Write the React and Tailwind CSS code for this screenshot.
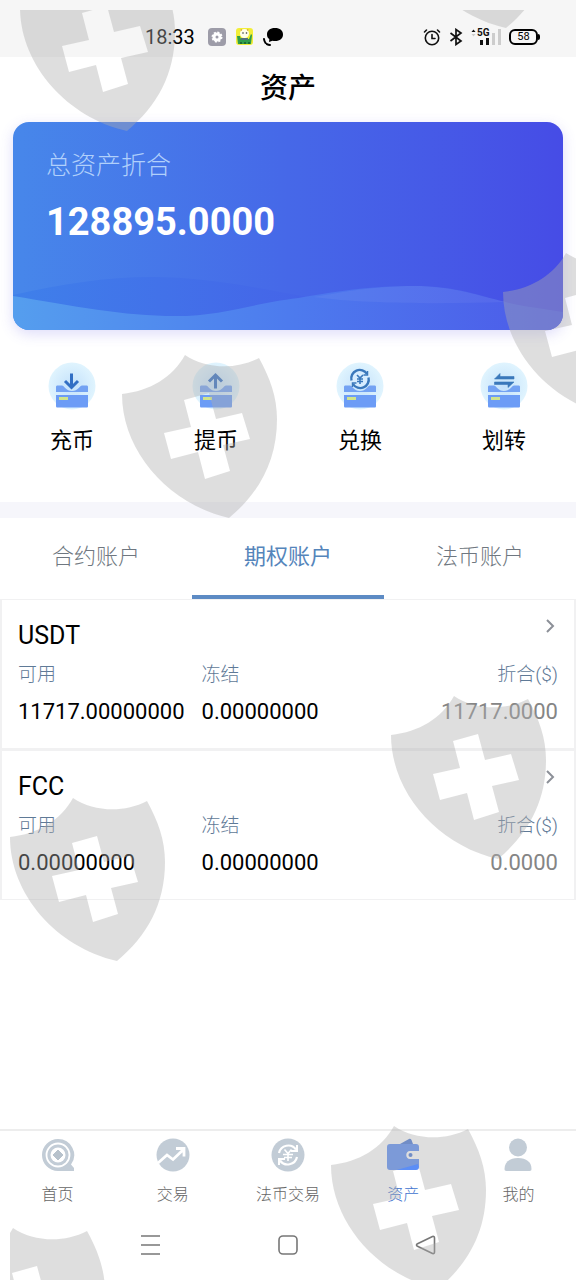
// src/App.jsx
import React, { useState } from 'react';

const actions = [
  { label: '充币', type: 'in' },
  { label: '提币', type: 'out' },
  { label: '兑换', type: 'exchange' },
  { label: '划转', type: 'transfer' },
];

const tabs = ['合约账户', '期权账户', '法币账户'];

const coins = [
  { name: 'USDT', available: '11717.00000000', frozen: '0.00000000', total: '11717.0000' },
  { name: 'FCC', available: '0.00000000', frozen: '0.00000000', total: '0.0000' },
];

const navItems = [
  { label: '首页', type: 'home' },
  { label: '交易', type: 'trade' },
  { label: '法币交易', type: 'fiat' },
  { label: '资产', type: 'wallet' },
  { label: '我的', type: 'me' },
];

const StatusBar = () => (
  <div className="flex h-[57px] items-center bg-[#f6f6f6] pt-4 pr-9 pl-[145px] text-black">
    <span className="text-xl">18:33</span>
    <svg className="ml-3 h-5 w-5" viewBox="0 0 20 20">
      <rect x="1" y="1" width="18" height="18" rx="4" fill="#9d9ca8" />
      <circle cx="10" cy="10" r="4.500" fill="#fff" />
      <circle cx="10" cy="10" r="4.500" fill="none" stroke="#fff" strokeWidth="2" strokeDasharray="2 1.500" />
      <circle cx="10" cy="10" r="1.500" fill="#9d9ca8" />
    </svg>
    <svg className="ml-2 h-5 w-5" viewBox="0 0 20 20">
      <rect x="1" y="1" width="17" height="17" rx="3" fill="#f2ee38" />
      <path d="M2 9h3l1 3h8l2-5 1 1-1 9H3z" fill="#2f9d4b" />
      <circle cx="9.500" cy="6.500" r="4.500" fill="#fffdec" />
      <path d="M5 3l2-1v2zM14 3l-2-1v2z" fill="#d9a63a" />
      <circle cx="8" cy="6" r=".8" fill="#333" />
      <circle cx="11.500" cy="6" r=".8" fill="#333" />
      <path d="M6 11h7v2H6z" fill="#51717d" />
      <path d="M5 15h2v2H5zM9 15h2v2H9zM13 15h2v2h-2z" fill="#1d6b35" />
    </svg>
    <svg className="ml-2 h-5 w-5" viewBox="0 0 20 20">
      <path d="M12 1c5 0 8 2.600 8 6.500S17 14 12 14c-1 0-1.600 0-2.500-.3L6 15l.3-3C4.700 11 4 9.500 4 7.500 4 3.600 7 1 12 1z" fill="#000" />
      <path d="M1 12c.5 4 3 6 6 6" fill="none" stroke="#000" strokeWidth="2" strokeLinecap="round" strokeDasharray="4 2" />
    </svg>
    <div className="ml-auto flex items-center gap-2">
      <svg className="h-[18px] w-[18px]" viewBox="0 0 18 18" fill="none" stroke="#111" strokeWidth="1.600" strokeLinecap="round">
        <circle cx="9" cy="10" r="6.700" />
        <path d="M9 6.500V10.500h3M1.500 4l2-2M16.500 4l-2-2" />
      </svg>
      <svg className="h-[18px] w-[14px]" viewBox="0 0 14 18" fill="none" stroke="#111" strokeWidth="1.700">
        <path d="M1.500 5l10.500 8-5 3.500v-15L12 5 1.500 13" />
      </svg>
      <svg className="h-[18px] w-[30px]" viewBox="0 0 30 18">
        <path d="M0.500 4L2.500 1.500 4.500 4z" fill="#111" />
        <path d="M0.500 6L2.500 8.500 4.500 6z" fill="#ccc" />
        <text x="6" y="8" fontSize="10" fontWeight="700" fill="#111">5G</text>
        <path d="M9 12h3v5H9zM15 10h3v7h-3z" fill="#111" />
        <path d="M21 5h3v12h-3zM27 1h3v16h-3z" fill="#cdcdcd" />
      </svg>
      <div className="flex items-center">
        <span className="flex h-4 w-[29px] items-center justify-center rounded-md border-2 border-black text-[11px] leading-none">58</span>
        <span className="h-1.5 w-0.5 rounded-r bg-black" />
      </div>
    </div>
  </div>
);

const BalanceCard = () => (
  <section className="mx-[13px] rounded-2xl shadow-[0_4px_14px_rgba(90,80,230,0.2)]">
    <div className="relative h-[208px] overflow-hidden rounded-2xl bg-linear-to-r from-[#4787ea] via-[#4668e8] to-[#464ce6] pt-[26px] pl-[33px]">
      <svg className="absolute inset-x-0 bottom-0 h-[60px] w-full" viewBox="0 0 549 60" preserveAspectRatio="none">
        <defs>
          <linearGradient id="deep" x1="0" x2="1">
            <stop offset="0" stopColor="#3f80ea" />
            <stop offset="1" stopColor="#4563e8" />
          </linearGradient>
          <linearGradient id="light" x1="0" x2="1">
            <stop offset="0" stopColor="#559eee" />
            <stop offset=".5" stopColor="#4d7bee" />
            <stop offset="1" stopColor="#4c5ae9" />
          </linearGradient>
        </defs>
        <path d="M0 25C50 14 90 7 140 7S240 17 300 28L200 50 0 40z" fill="url(#deep)" />
        <path d="M0 26C60 36 110 46 162 46C210 46 235 34 285 28C330 20 360 16 400 16C450 16 475 30 510 36L549 42V60H0z" fill="url(#light)" />
        <path d="M300 27C340 20 365 16 400 16C440 16 465 26 492 32C430 34 350 34 300 27z" fill="#fff" fillOpacity=".05" />
      </svg>
      <div className="relative">
        <h2 className="text-[25px] leading-9 font-light text-[#b1d0fb]">总资产折合</h2>
        <p className="mt-[15px] text-[38px] leading-[46px] font-bold text-white">128895.0000</p>
      </div>
    </div>
  </section>
);

const ActionIcon = ({ type }) => (
  <svg className="h-12 w-12" viewBox="0 0 48 48" fill="none">
    <defs>
      <radialGradient id={`halo-${type}`}>
        <stop offset="0" stopColor="#c3e1fb" />
        <stop offset="1" stopColor="#e0f4fe" />
      </radialGradient>
    </defs>
    <circle cx="24" cy="24" r="23.500" fill={`url(#halo-${type})`} />
    <path d="M8 25c0-1 .5-1.500 1.500-1.500H14c2 0 4 5.500 10 5.500s8-5.500 10-5.500h4.500c1 0 1.500.5 1.500 1.500v5H8z" fill="#73a2f3" />
    <path d="M8 33h32v11c0 1-.5 1.500-1.500 1.500h-29C8.500 45.500 8 45 8 44z" fill="#6c9cf6" />
    <path d="M11 35h9v3h-9z" fill="#d0e48c" />
    {type === 'in' && <path d="M23.500 11.500v14M17 19l6.500 6.500L30 19" stroke="#326fc4" strokeWidth="3" />}
    {type === 'out' && <path d="M23.500 26.500v-13M17 19.500l6.500-6.500 6.500 6.500" stroke="#326fc4" strokeWidth="3" />}
    {type === 'exchange' && (
      <g stroke="#3a78bb" strokeWidth="2.400">
        <circle cx="24" cy="17" r="10.500" fill="#d7edff" stroke="none" />
        <path d="M15.500 18.500A8.500 8.500 0 0 1 31 12M32.500 15.500A8.500 8.500 0 0 1 17 22" />
        <path d="M31.500 9v4h-4M16.500 25v-4h4" strokeWidth="1.500" />
        <path d="M21 13l3 3 3-3M24 16v6M21 17h6M21 19.500h6" strokeWidth="1.600" />
      </g>
    )}
    {type === 'transfer' && (
      <path
        d="M20 11.500V14.500h14v2.500H14.500zM14.500 20h19.500L28 25.500V22.500H14.500z"
        fill="#3a78bb"
        stroke="#3a78bb"
        strokeWidth=".6"
        strokeLinejoin="round"
      />
    )}
  </svg>
);

const CoinCard = ({ coin }) => (
  <li className="h-[150px] border-x-2 border-y border-[#f1f1f2] bg-white px-4 pt-3">
    <div className="flex justify-between">
      <h3 className="pt-1.5 text-[25px] leading-9 text-black">{coin.name}</h3>
      <button type="button" aria-label={coin.name} className="flex h-7 w-4 items-center justify-center">
        <svg className="h-3.5 w-2.5" viewBox="0 0 10 14" fill="none" stroke="#8c9098" strokeWidth="2">
          <path d="M2 1l6 6-6 6" />
        </svg>
      </button>
    </div>
    <dl className="mt-0.5 grid grid-cols-[34%_33%_33%]">
      <div>
        <dt className="text-[19px] leading-[38px] font-light text-[#5f7a97]">可用</dt>
        <dd className="text-[22px] leading-9 text-black">{coin.available}</dd>
      </div>
      <div>
        <dt className="text-[19px] leading-[38px] font-light text-[#5f7a97]">冻结</dt>
        <dd className="text-[22px] leading-9 text-black">{coin.frozen}</dd>
      </div>
      <div className="text-right">
        <dt className="text-[19px] leading-[38px] font-light text-[#5f7a97]">折合($)</dt>
        <dd className="text-[22px] leading-9 text-[#858585]">{coin.total}</dd>
      </div>
    </dl>
  </li>
);

const NavIcon = ({ type }) => (
  <svg className="h-9 w-9" viewBox="0 0 36 36" fill="none">
    {type === 'home' && (
      <g>
        <path d="M18 2a16 16 0 1 0 0 32h16v-3l-3-3.500A16 16 0 0 0 18 2z" fill="#c2ccd6" />
        <circle cx="18" cy="18" r="11.500" stroke="#fff" strokeWidth="1.800" />
        <circle cx="18" cy="18" r="7.500" fill="#fff" />
        <path d="M18 13l5 5-5 5-5-5z" fill="#b7c2cc" stroke="#b7c2cc" strokeLinejoin="round" />
      </g>
    )}
    {type === 'trade' && (
      <g>
        <circle cx="18" cy="18" r="16.500" fill="#c2ccd6" />
        <path d="M3 26l9-8 6 4.500L28.500 12.500M21 11.500h8v8" stroke="#fff" strokeWidth="2.800" />
      </g>
    )}
    {type === 'fiat' && (
      <g>
        <circle cx="18" cy="18" r="16.500" fill="#c2ccd6" />
        <path d="M9 16a9.500 9.500 0 0 1 17-3.500M27 20a9.500 9.500 0 0 1-17 3.500" stroke="#fff" strokeWidth="2.200" />
        <path d="M27 8v6h-6M9 28v-6h6" stroke="#fff" strokeWidth="2" />
        <path d="M14.500 12.500l3.500 4 3.500-4M18 16.500V24M13 17.500h10M14 20.500h8" stroke="#fff" strokeWidth="1.600" />
      </g>
    )}
    {type === 'wallet' && (
      <g>
        <path d="M15 7l9-5c1-.5 2 0 2.500 1L28 7z" fill="#4a78d8" />
        <path d="M5 7h26c2 0 3 1 3 3v4h-9c-5 0-5 8 0 8h9v8c0 2-1 3-3 3H5c-2 0-3-1-3-3V10c0-2 1-3 3-3z" fill="#5c8ef6" />
        <circle cx="25.500" cy="18" r="2" fill="#4a78d8" />
      </g>
    )}
    {type === 'me' && (
      <g fill="#c2ccd6">
        <circle cx="18" cy="10.500" r="9" />
        <path d="M4.500 32c0-7 5-11 13.500-11s13.500 4 13.500 11c0 1-.5 2-2 2h-23c-1.500 0-2-1-2-2z" />
      </g>
    )}
  </svg>
);

const SystemBar = () => (
  <div className="flex h-[70px] items-center justify-between px-[138px]">
    <button type="button" aria-label="menu">
      <svg className="h-6 w-6" viewBox="0 0 24 24" stroke="#777" strokeWidth="1.600">
        <path d="M3 3h19M3 12h19M3 21h19" />
      </svg>
    </button>
    <button type="button" aria-label="home">
      <svg className="h-6 w-6" viewBox="0 0 24 24" fill="none" stroke="#777" strokeWidth="1.600">
        <rect x="3" y="3" width="18" height="18" rx="4" />
      </svg>
    </button>
    <button type="button" aria-label="back">
      <svg className="h-6 w-6" viewBox="0 0 24 24" fill="none" stroke="#777" strokeWidth="1.600" strokeLinejoin="round">
        <path d="M3 11L18.500 3.500Q20.500 3 20.500 5v14q0 2-2 1.500L3 13Q2 12 3 11z" />
      </svg>
    </button>
  </div>
);

const Shield = ({ className }) => (
  <svg className={`absolute h-[164px] w-[156px] ${className}`} viewBox="0 0 156 164">
    <path
      d="M0 39C28 36 51 22 63 0C84 14 114 15 137 3C148 23 155 42 155 64C155 106 137 138 107 163C46 149 0 96 0 39z
         M62 45L69 72 42 78 49 104 76 97 83 124 108 116 101 90 128 84 120 58 94 64 87 38z"
      fill="#adadad"
      fillOpacity=".4"
      fillRule="evenodd"
    />
  </svg>
);

const Watermark = () => (
  <div className="pointer-events-none absolute top-2.5 right-0 bottom-0 left-2.5 overflow-hidden" aria-hidden="true">
    <Shield className="top-[-42px] left-2.5" />
    <Shield className="top-[-145px] left-[389px]" />
    <Shield className="top-[243px] left-[493px]" />
    <Shield className="top-[345px] left-28" />
    <Shield className="top-[686px] left-[381px]" />
    <Shield className="top-[788px] left-0" />
    <Shield className="top-[1116px] left-[321px]" />
    <Shield className="top-[1218px] left-[-60px]" />
  </div>
);

const App = () => {
  const [activeTab, setActiveTab] = useState('期权账户');
  const [activeNav, setActiveNav] = useState('资产');

  return (
    <div className="relative flex min-h-screen flex-col overflow-hidden bg-white font-[Roboto,'Noto_Sans_CJK_SC',sans-serif]">
      <StatusBar />
      <h1 className="pt-[11px] pb-[13px] text-center text-[28px] leading-[41px] font-medium text-black">资产</h1>
      <BalanceCard />

      <div className="grid grid-cols-4 pt-8 pb-11">
        {actions.map((action) => (
          <button key={action.label} type="button" className="flex flex-col items-center gap-3.5">
            <ActionIcon type={action.type} />
            <span className="text-[22px] leading-[34px] text-black">{action.label}</span>
          </button>
        ))}
      </div>

      <div className="h-4 bg-[#f6f6fb]" />

      <div className="grid grid-cols-3" role="tablist">
        {tabs.map((tab) => (
          <button
            key={tab}
            type="button"
            role="tab"
            aria-selected={tab === activeTab}
            onClick={() => setActiveTab(tab)}
            className={`h-[81px] border-b-4 text-[22px] ${
              tab === activeTab ? 'border-[#5d8bc4] text-[#5585bb]' : 'border-transparent font-light text-[#6f7780]'
            }`}
          >
            {tab}
          </button>
        ))}
      </div>

      <div className="flex-1">
        <ul className="flex flex-col gap-px bg-[#f1f1f2]">
          {coins.map((coin) => (
            <CoinCard key={coin.name} coin={coin} />
          ))}
        </ul>
      </div>

      <nav className="grid h-[81px] grid-cols-5 border-t-2 border-[#ededed]">
        {navItems.map((item) => (
          <button
            key={item.label}
            type="button"
            onClick={() => setActiveNav(item.label)}
            className={`flex flex-col items-center gap-2.5 pt-1.5 text-base font-light ${
              item.label === activeNav ? 'text-[#3f73cf]' : 'text-[#666]'
            }`}
          >
            <NavIcon type={item.type} />
            {item.label}
          </button>
        ))}
      </nav>
      <SystemBar />
      <Watermark />
    </div>
  );
};

export default App;
